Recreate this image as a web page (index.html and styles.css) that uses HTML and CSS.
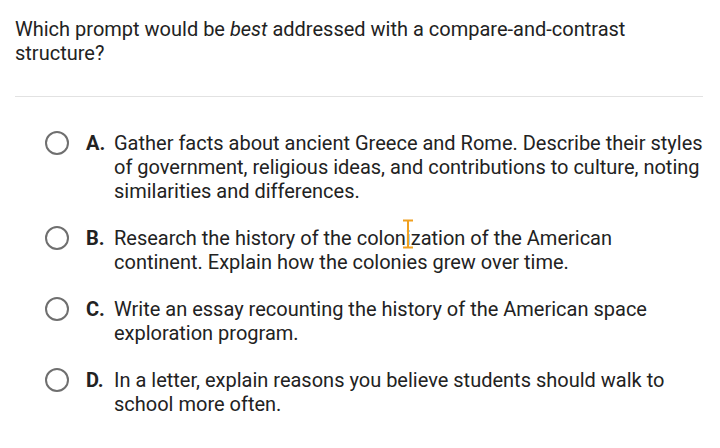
FILE: index.html
```html
<!DOCTYPE html>
<html>
<head>
<meta charset="utf-8">
<link rel="stylesheet" href="styles.css">
</head>
<body>
<div class="page">
  <div class="question">Which prompt would be <em>best</em> addressed with a compare-and-contrast structure?</div>
  <hr class="divider">
  <div class="options">
    <div class="option">
      <span class="radio"></span>
      <span class="letter">A.</span>
      <span class="text">Gather facts about ancient Greece and Rome. Describe their styles of government, religious ideas, and contributions to culture, noting similarities and differences.</span>
    </div>
    <div class="option">
      <span class="radio"></span>
      <span class="letter">B.</span>
      <span class="text">Research the history of the colonization of the American continent. Explain how the colonies grew over time.</span>
    </div>
    <div class="option">
      <span class="radio"></span>
      <span class="letter">C.</span>
      <span class="text">Write an essay recounting the history of the American space exploration program.</span>
    </div>
    <div class="option">
      <span class="radio"></span>
      <span class="letter">D.</span>
      <span class="text">In a letter, explain reasons you believe students should walk to school more often.</span>
    </div>
  </div>
  <svg class="cursor" width="14" height="30" viewBox="0 0 14 30">
    <path d="M2 1.5 H12 M2 28.5 H12 M7 1.5 V28.5" stroke="#f0a020" stroke-width="2" fill="none"/>
  </svg>
</div>
</body>
</html>
```
FILE: styles.css
```css
html, body {
  margin: 0;
  padding: 0;
  background: #fff;
}
.page {
  position: relative;
  width: 720px;
  height: 448px;
  font-family: Roboto, "Liberation Sans", sans-serif;
  color: #222;
}
.question {
  padding: 17px 15px 0 15px;
  font-size: 20px;
  line-height: 24px;
  width: 640px;
}
.question em {
  font-style: italic;
}
.divider {
  margin: 31px 17px 0 15px;
  border: 0;
  border-top: 1px solid #e2e2e2;
  height: 0;
}
.options {
  display: flex;
  flex-direction: column;
  gap: 23px;
  padding: 34px 0 0 45px;
}
.option {
  display: flex;
  align-items: flex-start;
  font-size: 20px;
  line-height: 24px;
}
.radio {
  flex: none;
  width: 20px;
  height: 20px;
  border: 2px solid #6f6f6f;
  border-radius: 50%;
}
.letter {
  flex: none;
  width: 28px;
  margin-left: 17px;
  font-weight: bold;
}
.text {
  width: 589px;
}
.cursor {
  position: absolute;
  left: 401px;
  top: 219px;
}
```
